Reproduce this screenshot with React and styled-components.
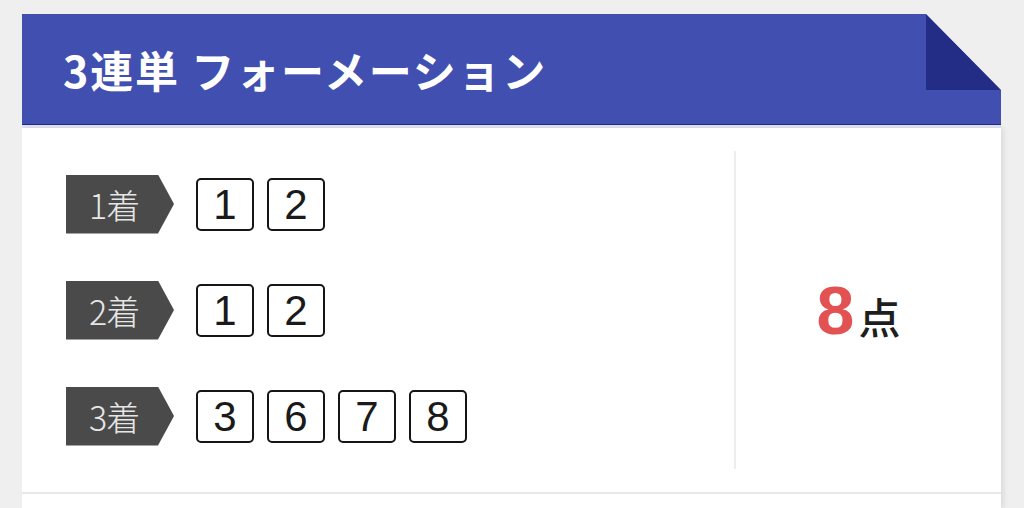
import React from "react";
import styled, { createGlobalStyle } from "styled-components";

const GlobalStyle = createGlobalStyle`
  body {
    margin: 0;
    background: #efefef;
    font-family: "Noto Sans CJK JP", "Noto Sans", sans-serif;
  }
`;

const Page = styled.div`
  padding: 14px 23px 0 22px;
  height: 494px;
  overflow: hidden;
`;

const Header = styled.header`
  position: relative;
  height: 110px;
  display: flex;
  align-items: center;
  padding-left: 41px;
  background: #4150b0;
  border-bottom: 1px solid #1f2a80;
  clip-path: polygon(0 0, calc(100% - 75px) 0, 100% 76px, 100% 100%, 0 100%);
`;

const Fold = styled.span`
  position: absolute;
  top: 0;
  right: 0;
  width: 75px;
  height: 76px;
  background: #232d86;
  clip-path: polygon(0 0, 100% 100%, 0 100%);
`;

const Title = styled.h2`
  margin: 0;
  color: #fff;
  font-size: 43px;
  font-weight: 700;
  letter-spacing: 1.8px;
`;

const Rule = styled.div`
  height: 3px;
  background: #dfe2f2;
`;

const Card = styled.section`
  background: #fff;
  box-shadow: 3px 0 5px rgba(0, 0, 0, 0.08);
  height: 380px;
`;

const CardBody = styled.div`
  display: flex;
  padding: 23px 0;
  border-bottom: 2px solid #e8e8e8;
`;

const Places = styled.div`
  width: 668px;
  padding-left: 44px;
  border-right: 2px solid #eeeeee;
`;

const Row = styled.div`
  height: 106px;
  display: flex;
  align-items: center;
`;

const Badge = styled.div`
  width: 85px;
  height: 59px;
  padding-left: 23px;
  margin-right: 22px;
  display: flex;
  align-items: center;
  background: #4a4a4a;
  color: #e6e6e6;
  font-size: 34px;
  font-weight: 300;
  letter-spacing: -1px;
  clip-path: polygon(0 0, 92px 0, 100% 50%, 92px 100%, 0 100%);
`;

const Boxes = styled.div`
  display: flex;
  gap: 13px;
`;

const NumBox = styled.div`
  box-sizing: border-box;
  width: 58px;
  height: 53px;
  border: 2px solid #151515;
  border-radius: 5px;
  display: flex;
  align-items: center;
  justify-content: center;
  font-family: "Liberation Sans", Arial, sans-serif;
  font-size: 42px;
  color: #1a1a1a;
  line-height: 1;
  padding-top: 2px;
`;

const Total = styled.div`
  flex: 1;
  display: flex;
  align-items: baseline;
  justify-content: center;
  align-self: center;
  padding-right: 20px;
`;

const Count = styled.span`
  font-family: "Liberation Sans", Arial, sans-serif;
  font-size: 68px;
  font-weight: 700;
  color: #e35252;
  line-height: 1;
`;

const Unit = styled.span`
  font-size: 42px;
  font-weight: 500;
  color: #1e1e1e;
  line-height: 1;
  margin-left: 4px;
`;

const places = [
  { label: "1着", nums: [1, 2] },
  { label: "2着", nums: [1, 2] },
  { label: "3着", nums: [3, 6, 7, 8] },
];

export default function App() {
  return (
    <>
      <GlobalStyle />
      <Page>
        <Header>
          <Title>3連単 フォーメーション</Title>
          <Fold />
        </Header>
        <Rule />
        <Card>
          <CardBody>
            <Places>
              {places.map((p) => (
                <Row key={p.label}>
                  <Badge>{p.label}</Badge>
                  <Boxes>
                    {p.nums.map((n) => (
                      <NumBox key={n}>{n}</NumBox>
                    ))}
                  </Boxes>
                </Row>
              ))}
            </Places>
            <Total>
              <Count>8</Count>
              <Unit>点</Unit>
            </Total>
          </CardBody>
        </Card>
      </Page>
    </>
  );
}
